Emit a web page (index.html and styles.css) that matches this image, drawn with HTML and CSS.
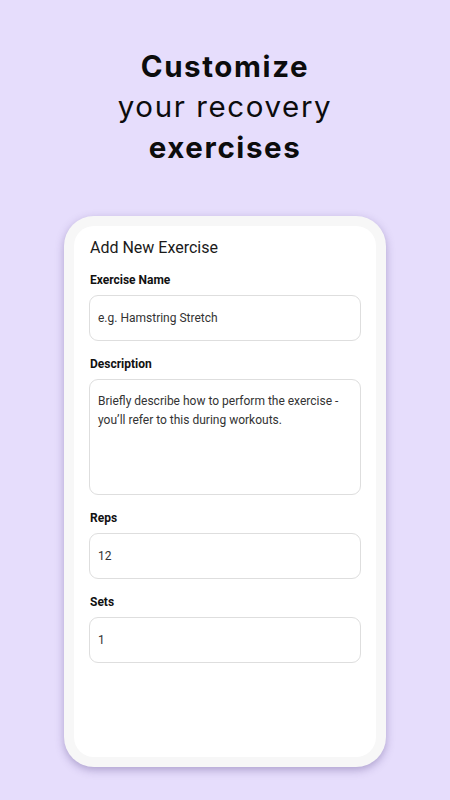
FILE: index.html
```html
<!DOCTYPE html>
<html lang="en">
<head>
<meta charset="utf-8">
<title>Customize your recovery exercises</title>
<link rel="stylesheet" href="styles.css">
</head>
<body>
<main class="page">
  <h1 class="headline">
    <span class="strong">Customize</span>
    <span class="light">your recovery</span>
    <span class="strong">exercises</span>
  </h1>
  <div class="phone">
    <div class="screen">
      <h2 class="form-title">Add New Exercise</h2>
      <div class="group">
        <div class="label">Exercise Name</div>
        <div class="field">e.g. Hamstring Stretch</div>
      </div>
      <div class="group">
        <div class="label">Description</div>
        <div class="field area">Briefly describe how to perform the exercise - you’ll refer to this during workouts.</div>
      </div>
      <div class="group">
        <div class="label">Reps</div>
        <div class="field">12</div>
      </div>
      <div class="group">
        <div class="label">Sets</div>
        <div class="field">1</div>
      </div>
    </div>
  </div>
</main>
</body>
</html>
```

FILE: styles.css
```css
* { box-sizing: border-box; }
html, body { margin: 0; padding: 0; }
body {
  background: #e6ddfc;
  width: 450px;
  height: 800px;
  overflow: hidden;
  font-family: Roboto, "Liberation Sans", sans-serif;
}
.page {
  display: flex;
  flex-direction: column;
  align-items: center;
}
.headline {
  margin: 0;
  padding-top: 45.5px;
  display: flex;
  flex-direction: column;
  align-items: center;
  font-family: Inter, "Open Sans", sans-serif;
  font-size: 29.5px;
  line-height: 40.5px;
  color: #0c0c0c;
  letter-spacing: 1.6px;
}
.headline .strong { font-weight: 700; }
.headline .light { font-weight: 400; }
.phone {
  margin-top: 48.5px;
  width: 322px;
  height: 551px;
  padding: 10px;
  background: #f7f7f7;
  border-radius: 30px;
  box-shadow: 0 3px 8px rgba(70, 50, 120, 0.35);
}
.screen {
  height: 100%;
  background: #ffffff;
  border-radius: 20px;
  padding: 12px 15px 0 15px;
  display: flex;
  flex-direction: column;
}
.form-title {
  margin: 0 0 15px 1px;
  font-size: 16px;
  line-height: 19px;
  font-weight: 400;
  color: #1a1a1a;
}
.group {
  display: flex;
  flex-direction: column;
  gap: 7px;
  margin-bottom: 15px;
}
.label {
  font-size: 12px;
  line-height: 16px;
  font-weight: 700;
  color: #111;
  padding-left: 1px;
}
.field {
  height: 46px;
  border: 1px solid #dedede;
  border-radius: 9px;
  padding: 0 8px;
  display: flex;
  align-items: center;
  font-size: 12px;
  color: #333333;
}
.field.area {
  height: 116px;
  align-items: flex-start;
  padding: 12px 8px;
  line-height: 19px;
}
```
